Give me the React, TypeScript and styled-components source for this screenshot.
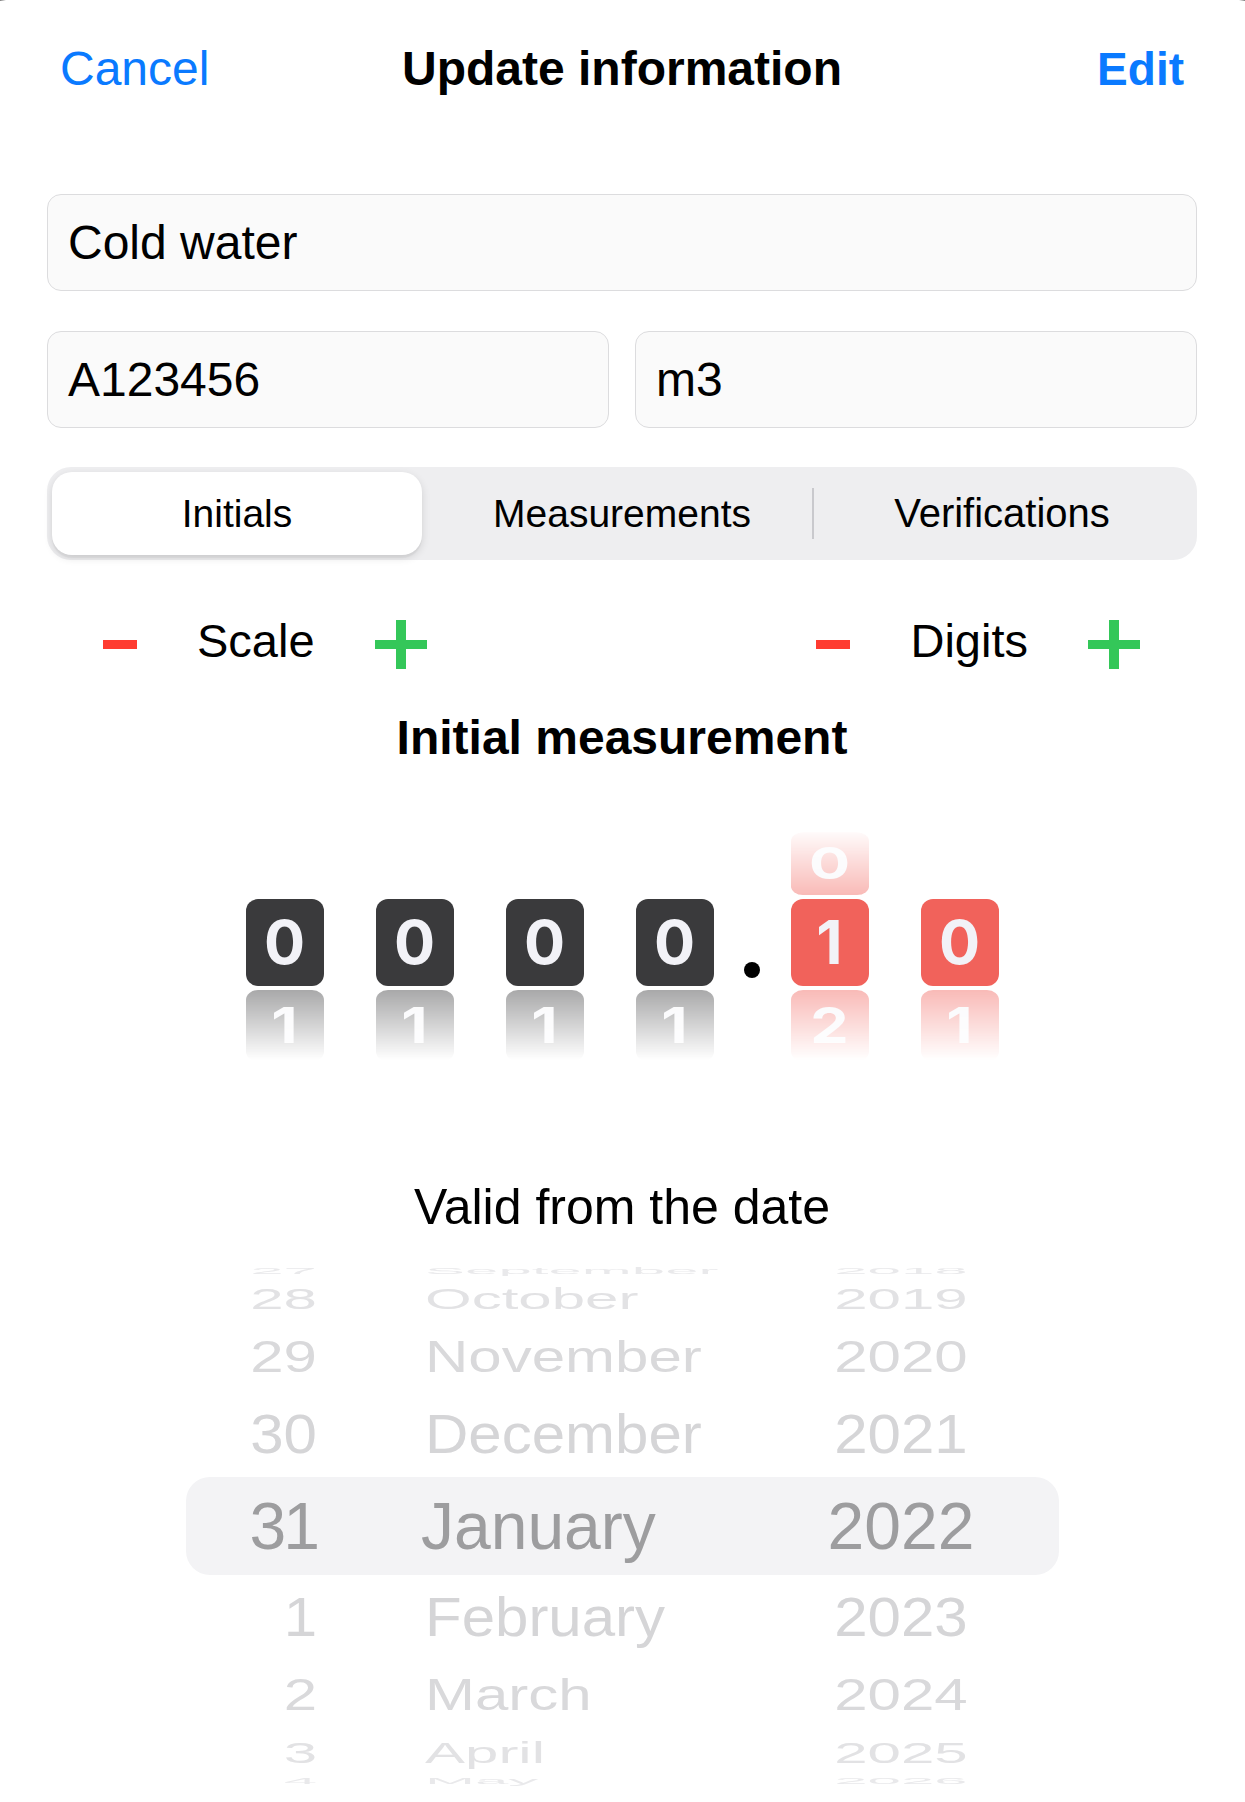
import React from "react";
import styled, { createGlobalStyle, css } from "styled-components";

const GlobalStyle = createGlobalStyle`
  html, body { margin: 0; padding: 0; background: #000; }
  body {
    font-family: "Liberation Sans", Helvetica, Arial, sans-serif;
    -webkit-font-smoothing: antialiased;
  }
  * { box-sizing: border-box; }
`;

const Screen = styled.div`
  width: 1245px;
  height: 1802px;
  background: #000;
  overflow: hidden;
`;

const Sheet = styled.div`
  margin: 0 -34px;
  padding: 0 34px;
  height: 1802px;
  background: #fff;
  border-radius: 40px 40px 0 0;
`;

const Header = styled.header`
  height: 138px;
  display: grid;
  grid-template-columns: 1fr auto 1fr;
  align-items: center;
  padding: 0 61px 0 60px;
`;

const NavButton = styled.button<{ $primary?: boolean }>`
  all: unset;
  cursor: pointer;
  color: #0a7aff;
  line-height: 1;
  font-size: ${(p) => (p.$primary ? 46 : 48)}px;
  font-weight: ${(p) => (p.$primary ? 700 : 400)};
  justify-self: ${(p) => (p.$primary ? "end" : "start")};
`;

const Title = styled.h1`
  margin: 0;
  font-size: 48px;
  font-weight: 700;
  line-height: 1;
  color: #000;
`;

const Form = styled.main`
  padding: 56px 48px 0 47px;
  display: flex;
  flex-direction: column;
`;

const Field = styled.div`
  height: 97px;
  border: 1.5px solid #dcdcde;
  border-radius: 14px;
  background: #fafafa;
  display: flex;
  align-items: center;
  padding: 0 20px;
  font-size: 48px;
  color: #000;
`;

const FieldRow = styled.div`
  margin-top: 40px;
  display: grid;
  grid-template-columns: 1fr 1fr;
  gap: 26px;
`;

const Segmented = styled.div`
  margin-top: 39px;
  height: 93px;
  padding: 5px;
  background: #eeeef0;
  border-radius: 24px;
  display: grid;
  grid-template-columns: repeat(3, 1fr);
`;

const Segment = styled.div<{ $active?: boolean; $divider?: boolean }>`
  display: flex;
  align-items: center;
  justify-content: center;
  font-size: 39px;
  color: #000;
  ${(p) =>
    p.$active &&
    css`
      margin-right: 10px;
      background: #fff;
      border-radius: 20px;
      box-shadow: 0 3px 8px rgba(0, 0, 0, 0.12), 0 3px 1px rgba(0, 0, 0, 0.04);
    `}
  ${(p) =>
    p.$divider &&
    css`
      font-size: 40px;
      background: linear-gradient(#c9c9cd, #c9c9cd) left center / 2px 51px no-repeat;
    `}
`;

const AdjustRow = styled.div`
  margin-top: 54px;
  height: 60px;
  display: flex;
  justify-content: space-between;
  align-items: center;
  padding: 0 57px 0 56px;
`;

const Adjuster = styled.div`
  display: flex;
  align-items: center;
  gap: 60px;
`;

const AdjLabel = styled.span`
  font-size: 47px;
  line-height: 1;
  padding-bottom: 7px;
  color: #000;
`;

const IconButton = styled.button`
  all: unset;
  cursor: pointer;
  display: flex;
  align-items: center;
`;

const Heading = styled.h2<{ $bold?: boolean; $gap: number }>`
  margin: ${(p) => p.$gap}px 0 0;
  text-align: center;
  line-height: 56px;
  color: #000;
  font-size: ${(p) => (p.$bold ? 48 : 50)}px;
  font-weight: ${(p) => (p.$bold ? 700 : 400)};
`;

const Counter = styled.div`
  margin-top: 62px;
  display: flex;
  justify-content: center;
`;

const DigitGroup = styled.div`
  display: flex;
  gap: 52px;
`;

const Wheel = styled.div`
  width: 78px;
  display: flex;
  flex-direction: column;
  gap: 4px;
`;

const Ghost = styled.div<{ $pos: "above" | "below" }>`
  height: ${(p) => (p.$pos === "above" ? 67 : 70)}px;
  overflow: hidden;
  display: flex;
  flex-direction: column;
  justify-content: ${(p) => (p.$pos === "above" ? "flex-end" : "flex-start")};
  ${(p) =>
    p.$pos === "above"
      ? css`
          -webkit-mask-image: linear-gradient(to bottom, rgba(0, 0, 0, 0) 0%, rgba(0, 0, 0, 0.2) 45%, rgba(0, 0, 0, 0.44) 100%);
          mask-image: linear-gradient(to bottom, rgba(0, 0, 0, 0) 0%, rgba(0, 0, 0, 0.2) 45%, rgba(0, 0, 0, 0.44) 100%);
        `
      : css`
          -webkit-mask-image: linear-gradient(to bottom, rgba(0, 0, 0, 0.44) 0%, rgba(0, 0, 0, 0.2) 55%, rgba(0, 0, 0, 0) 100%);
          mask-image: linear-gradient(to bottom, rgba(0, 0, 0, 0.44) 0%, rgba(0, 0, 0, 0.2) 55%, rgba(0, 0, 0, 0) 100%);
        `}
`;

const Tile = styled.div<{ $tone: "dark" | "red"; $squash?: "up" | "down" }>`
  width: 78px;
  height: 87px;
  flex-shrink: 0;
  border-radius: 12px;
  background: ${(p) => (p.$tone === "red" ? "#f1625b" : "#3a3a3c")};
  color: #f2f2f7;
  font-family: Inter, "Liberation Sans", sans-serif;
  font-weight: 700;
  font-size: 61px;
  line-height: 1;
  display: flex;
  align-items: center;
  justify-content: center;
  ${(p) =>
    p.$squash === "up" &&
    css`
      transform: scaleY(0.72);
      transform-origin: bottom;
    `}
  ${(p) =>
    p.$squash === "down" &&
    css`
      transform: scaleY(0.82);
      transform-origin: top;
    `}
`;

const DotSlot = styled.div`
  width: 77px;
  display: flex;
  justify-content: center;
  padding-top: 134px;
`;

const Dot = styled.span`
  width: 16px;
  height: 16px;
  border-radius: 50%;
  background: #000;
`;

const Picker = styled.div`
  margin: 29px 0 0 139px;
  width: 873px;
  display: flex;
  flex-direction: column;
`;

const PickerRow = styled.div<{ $selected?: boolean }>`
  flex-shrink: 0;
  overflow: hidden;
  display: grid;
  grid-template-columns: 131px 449px 270px;
  align-items: center;
  ${(p) =>
    p.$selected &&
    css`
      background: #f3f3f5;
      border-radius: 24px;
    `}
`;

const PickerCell = styled.span<{ $col: "day" | "month" | "year"; $selected?: boolean }>`
  display: block;
  height: 0;
  white-space: nowrap;
  line-height: 0;
  font-size: ${(p) => (p.$selected ? 66 : 60)}px;
  text-align: ${(p) => (p.$col === "day" ? "right" : p.$col === "month" ? "left" : "center")};
  padding-left: ${(p) => (p.$col === "month" ? (p.$selected ? 104 : 108) : 0)}px;
  letter-spacing: ${(p) => (p.$selected && p.$col === "day" ? -3 : 0)}px;
`;

const Minus = () => (
  <svg width="34" height="9" viewBox="0 0 34 9">
    <rect width="34" height="9" fill="#ff3b30" />
  </svg>
);

const Plus = () => (
  <svg width="52" height="49" viewBox="0 0 52 49">
    <rect x="0" y="20" width="52" height="9" fill="#34c759" />
    <rect x="21" y="0" width="10" height="49" fill="#34c759" />
  </svg>
);

type Digit = { value: string; above?: string; below?: string; tone: "dark" | "red" };

const intDigits: Digit[] = [
  { value: "0", below: "1", tone: "dark" },
  { value: "0", below: "1", tone: "dark" },
  { value: "0", below: "1", tone: "dark" },
  { value: "0", below: "1", tone: "dark" },
];

const fracDigits: Digit[] = [
  { value: "1", above: "0", below: "2", tone: "red" },
  { value: "0", below: "1", tone: "red" },
];

const DigitWheel = ({ d }: { d: Digit }) => (
  <Wheel>
    <Ghost $pos="above">
      {d.above !== undefined && (
        <Tile $tone={d.tone} $squash="up">
          {d.above}
        </Tile>
      )}
    </Ghost>
    <Tile $tone={d.tone}>{d.value}</Tile>
    <Ghost $pos="below">
      {d.below !== undefined && (
        <Tile $tone={d.tone} $squash="down">
          {d.below}
        </Tile>
      )}
    </Ghost>
  </Wheel>
);

const RADIUS = 262;
const STEP = (20.5 * Math.PI) / 180;
const SELECTED_HEIGHT = 98;

const dateRows = [
  ["27", "September", "2018"],
  ["28", "October", "2019"],
  ["29", "November", "2020"],
  ["30", "December", "2021"],
  ["31", "January", "2022"],
  ["1", "February", "2023"],
  ["2", "March", "2024"],
  ["3", "April", "2025"],
  ["4", "May", "2026"],
];

const fadeColors = ["#9d9d9f", "#d5d5d7", "#d9d9db", "#e2e2e4", "#e9e9eb"];

const slotHeight = (offset: number) => {
  const k = Math.abs(offset);
  if (k === 0) return SELECTED_HEIGHT;
  const inner = k === 1 ? SELECTED_HEIGHT / 2 : RADIUS * Math.sin((k - 0.5) * STEP);
  const outer = RADIUS * Math.sin(Math.min((k + 0.5) * STEP, Math.PI / 2));
  return outer - inner;
};

export default function App() {
  return (
    <Screen>
      <GlobalStyle />
      <Sheet>
        <Header>
          <NavButton>Cancel</NavButton>
          <Title>Update information</Title>
          <NavButton $primary>Edit</NavButton>
        </Header>
        <Form>
          <Field>Cold water</Field>
          <FieldRow>
            <Field>A123456</Field>
            <Field>m3</Field>
          </FieldRow>
          <Segmented>
            <Segment $active>Initials</Segment>
            <Segment>Measurements</Segment>
            <Segment $divider>Verifications</Segment>
          </Segmented>
          <AdjustRow>
            <Adjuster>
              <IconButton aria-label="Decrease scale">
                <Minus />
              </IconButton>
              <AdjLabel>Scale</AdjLabel>
              <IconButton aria-label="Increase scale">
                <Plus />
              </IconButton>
            </Adjuster>
            <Adjuster>
              <IconButton aria-label="Decrease digits">
                <Minus />
              </IconButton>
              <AdjLabel>Digits</AdjLabel>
              <IconButton aria-label="Increase digits">
                <Plus />
              </IconButton>
            </Adjuster>
          </AdjustRow>
          <Heading $bold $gap={36}>
            Initial measurement
          </Heading>
          <Counter>
            <DigitGroup>
              {intDigits.map((d, i) => (
                <DigitWheel key={i} d={d} />
              ))}
            </DigitGroup>
            <DotSlot>
              <Dot />
            </DotSlot>
            <DigitGroup>
              {fracDigits.map((d, i) => (
                <DigitWheel key={i} d={d} />
              ))}
            </DigitGroup>
          </Counter>
          <Heading $gap={119}>Valid from the date</Heading>
          <Picker>
            {dateRows.map((row, idx) => {
              const offset = idx - 4;
              const k = Math.abs(offset);
              const selected = k === 0;
              const squash = selected ? 1 : Math.cos(k * STEP);
              return (
                <PickerRow key={idx} $selected={selected} style={{ height: slotHeight(offset) }}>
                  {(["day", "month", "year"] as const).map((col, c) => (
                    <PickerCell
                      key={col}
                      $col={col}
                      $selected={selected}
                      style={{ color: fadeColors[k], transform: `scaleY(${squash.toFixed(3)})` }}
                    >
                      {row[c]}
                    </PickerCell>
                  ))}
                </PickerRow>
              );
            })}
          </Picker>
        </Form>
      </Sheet>
    </Screen>
  );
}
